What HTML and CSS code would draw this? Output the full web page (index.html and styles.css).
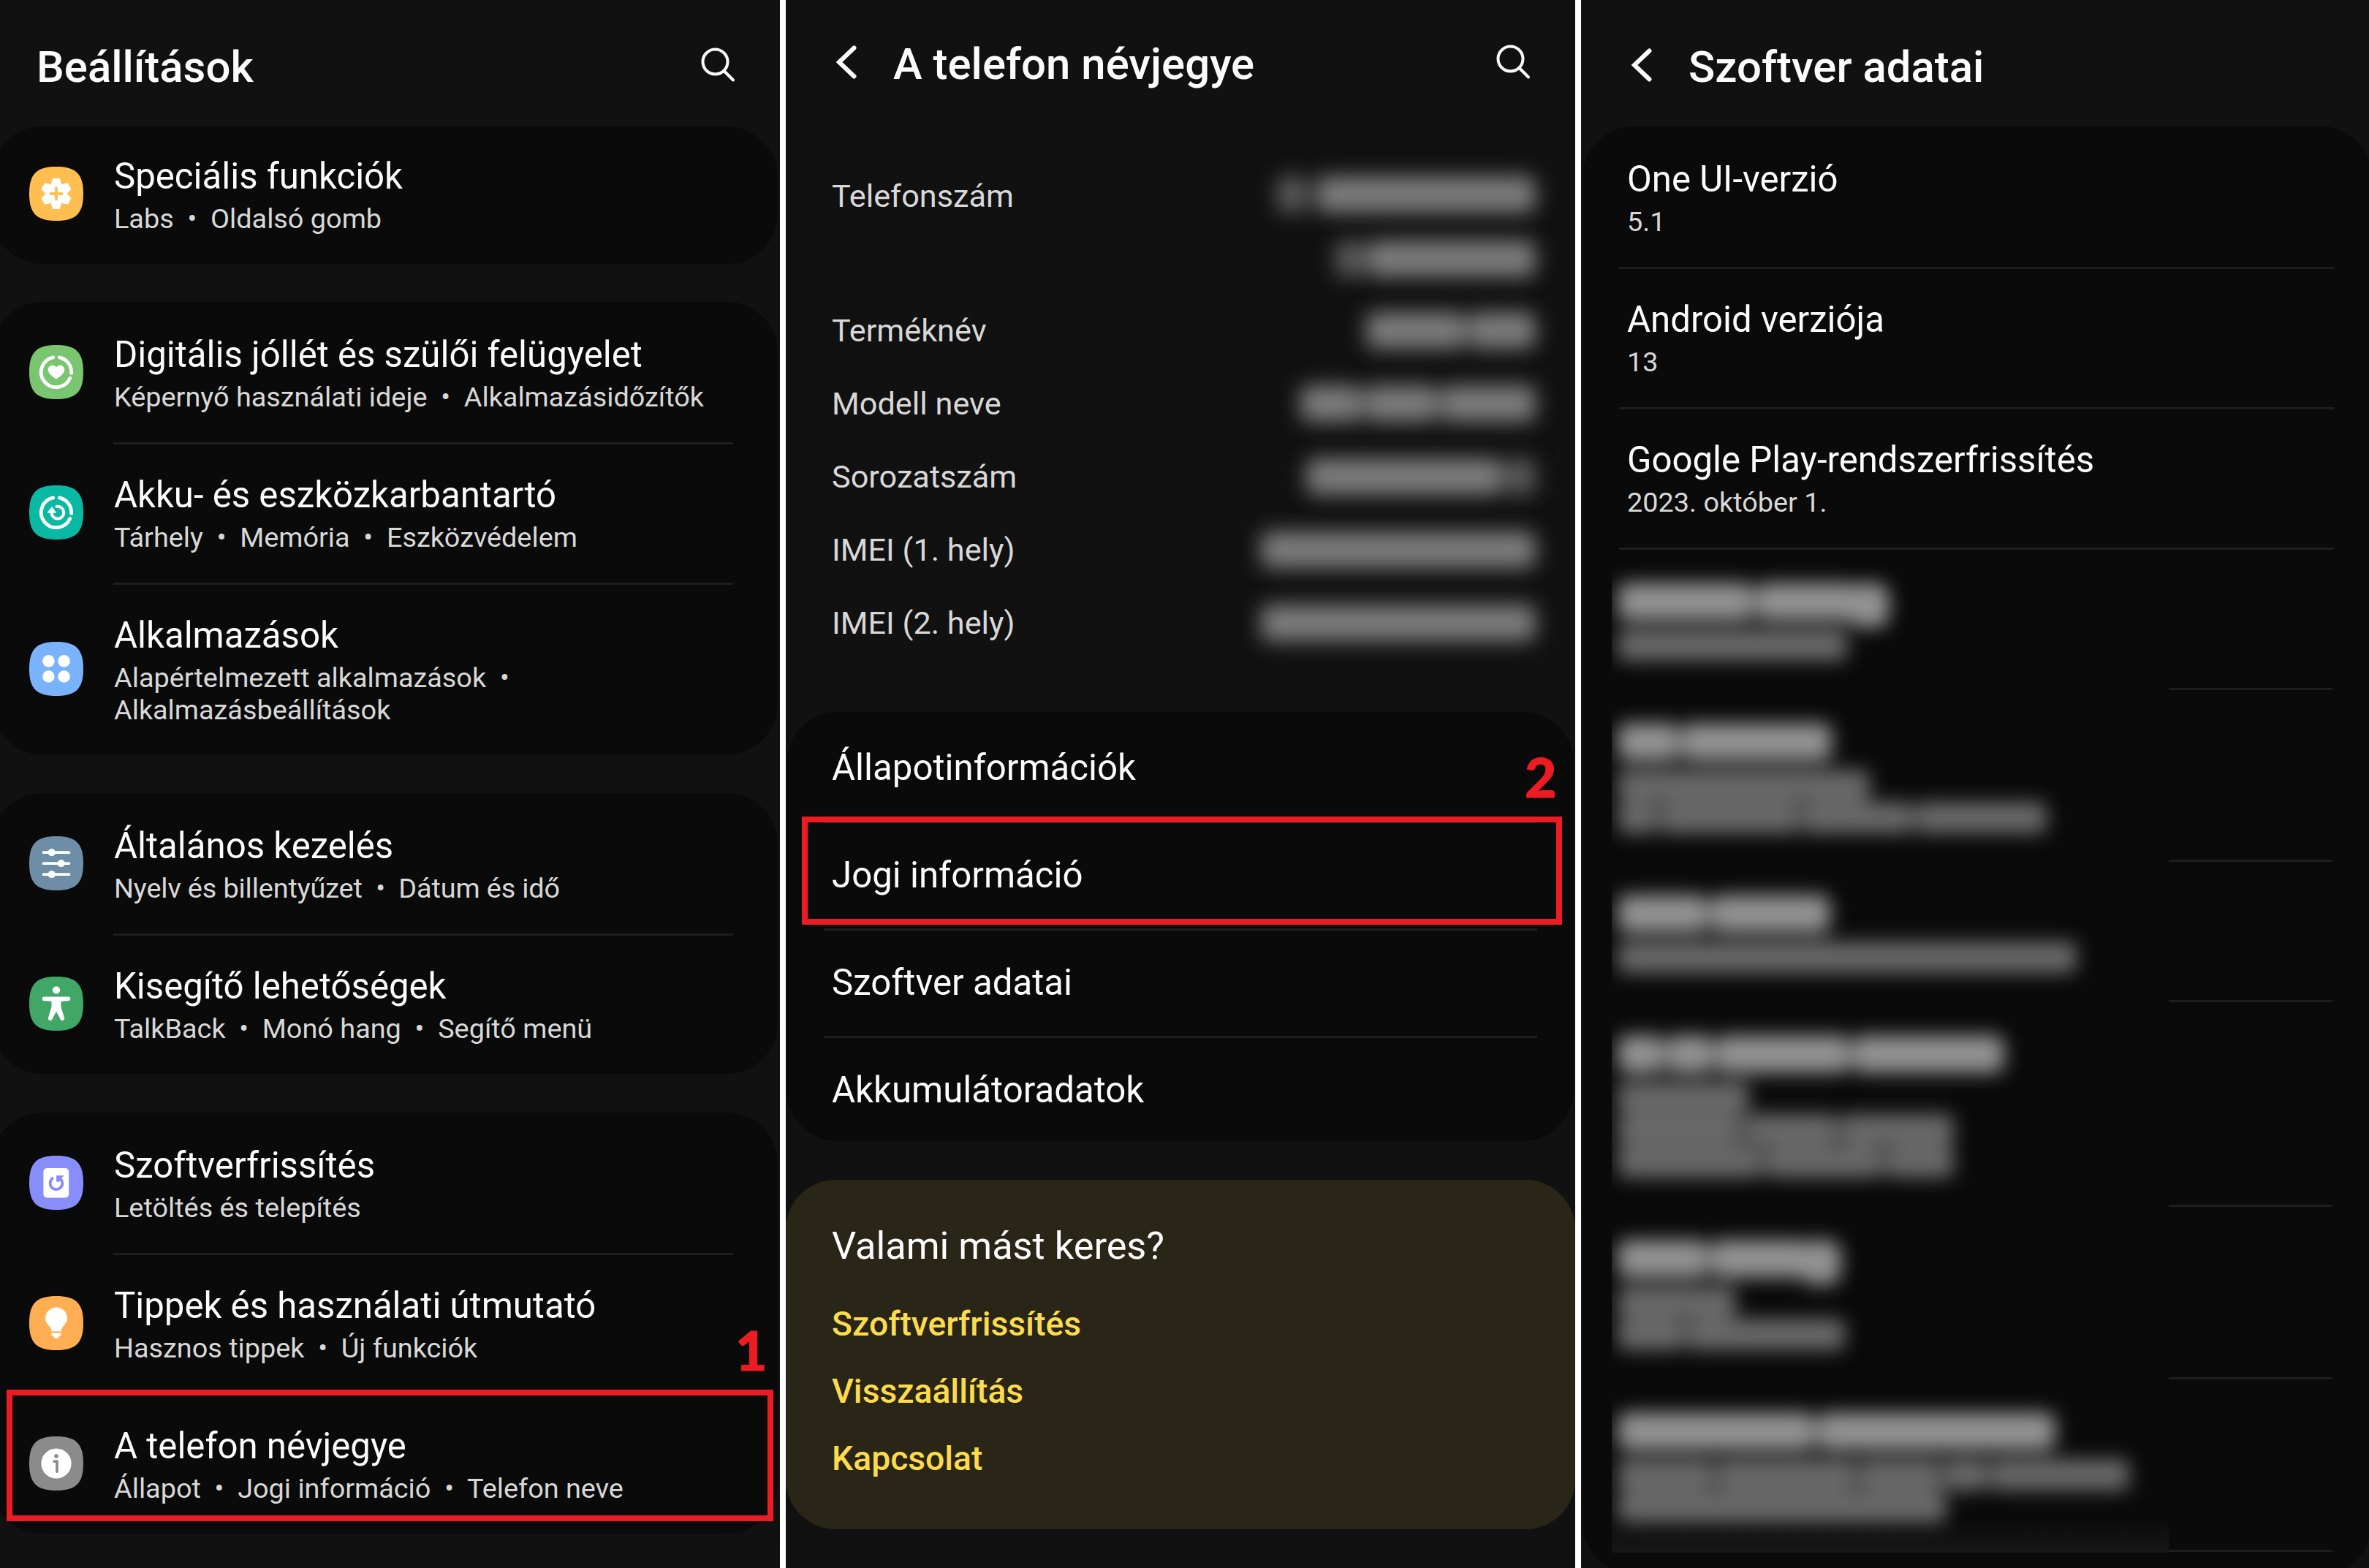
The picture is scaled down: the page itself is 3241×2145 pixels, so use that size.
FILE: index.html
```html
<!DOCTYPE html>
<html lang="hu">
<head>
<meta charset="utf-8">
<title>Beállítások</title>
<link rel="stylesheet" href="styles.css">
</head>
<body>
<main class="screens">

  <section class="screen screen-settings">
    <header class="header">
      <h1 class="heading">Beállítások</h1>
      <svg class="search" viewBox="0 0 50 50"><circle cx="20.5" cy="20.5" r="17"/><path d="M32.5 33L45 45.5"/></svg>
    </header>

    <div class="card card-first">
      <div class="row">
        <svg class="icon" viewBox="0 0 74 74">
          <path fill="#ffbe4f" d="M37 0C64 0 74 10 74 37S64 74 37 74 0 64 0 37 10 0 37 0Z"/>
          <g transform="translate(37 37)" fill="#fff" stroke="#fff" stroke-width="2" stroke-linejoin="round">
            <circle r="13.5"/>
            <path d="M-4-20h8l2 6v28l-2 6h-8l-2-6v-28z"/>
            <path transform="rotate(60)" d="M-4-20h8l2 6v28l-2 6h-8l-2-6v-28z"/>
            <path transform="rotate(120)" d="M-4-20h8l2 6v28l-2 6h-8l-2-6v-28z"/>
          </g>
          <path d="M37 29.5v15M29.5 37h15" stroke="#ffbe4f" stroke-width="3.8" stroke-linecap="round"/>
        </svg>
        <div class="text"><div class="title">Speciális funkciók</div><div class="sub">Labs&nbsp; •&nbsp; Oldalsó gomb</div></div>
      </div>
    </div>

    <div class="card">
      <div class="row">
        <svg class="icon" viewBox="0 0 74 74">
          <path fill="#7ac670" d="M37 0C64 0 74 10 74 37S64 74 37 74 0 64 0 37 10 0 37 0Z"/>
          <path class="ring" d="M32.7 16.9A20.6 20.6 0 1 0 55.7 45.4M41.3 16.9A20.6 20.6 0 0 1 57.6 38.4"/>
          <path fill="#fff" d="M37 46.8C33 43.6 25.8 39.5 25.8 33.6 25.8 27.8 33.5 25.6 37 30.6 40.5 25.6 48.2 27.8 48.2 33.6 48.2 39.5 41 43.6 37 46.8Z"/>
        </svg>
        <div class="text"><div class="title">Digitális jóllét és szülői felügyelet</div><div class="sub">Képernyő használati ideje&nbsp; •&nbsp; Alkalmazásidőzítők</div></div>
      </div>
      <div class="row">
        <svg class="icon" viewBox="0 0 74 74">
          <path fill="#0ab9a3" d="M37 0C64 0 74 10 74 37S64 74 37 74 0 64 0 37 10 0 37 0Z"/>
          <path class="ring" d="M32.7 16.9A20.6 20.6 0 1 0 55.7 45.4M41.3 16.9A20.6 20.6 0 0 1 57.6 38.4"/>
          <path class="ring thin" d="M37.5 29A8.3 8.3 0 1 1 30.6 37.5"/>
          <path fill="#fff" stroke="#fff" stroke-width="1.5" stroke-linejoin="round" d="M31 30.2L36 37H25.5Z"/>
        </svg>
        <div class="text"><div class="title">Akku- és eszközkarbantartó</div><div class="sub">Tárhely&nbsp; •&nbsp; Memória&nbsp; •&nbsp; Eszközvédelem</div></div>
      </div>
      <div class="row row-tall">
        <svg class="icon" viewBox="0 0 74 74">
          <path fill="#79b3fc" d="M37 0C64 0 74 10 74 37S64 74 37 74 0 64 0 37 10 0 37 0Z"/>
          <g fill="#fff"><circle cx="26.4" cy="26.3" r="8.3"/><circle cx="47.6" cy="26.3" r="8.3"/><circle cx="26.4" cy="47.5" r="8.3"/><circle cx="47.6" cy="47.5" r="8.3"/></g>
        </svg>
        <div class="text"><div class="title">Alkalmazások</div><div class="sub">Alapértelmezett alkalmazások&nbsp; •<br>Alkalmazásbeállítások</div></div>
      </div>
    </div>

    <div class="card">
      <div class="row">
        <svg class="icon" viewBox="0 0 74 74">
          <path fill="#6d8ea6" d="M37 0C64 0 74 10 74 37S64 74 37 74 0 64 0 37 10 0 37 0Z"/>
          <path d="M19.5 22.2h35M19.5 37.2h35M19.5 52.2h35" stroke="#fff" stroke-width="3.8" stroke-linecap="round"/>
          <g fill="#fff"><circle cx="30.7" cy="22.2" r="5.1"/><circle cx="43.7" cy="37.2" r="5.1"/><circle cx="30.7" cy="52.2" r="5.1"/></g>
        </svg>
        <div class="text"><div class="title">Általános kezelés</div><div class="sub sub-tight">Nyelv és billentyűzet&nbsp; •&nbsp; Dátum és idő</div></div>
      </div>
      <div class="row row-end">
        <svg class="icon" viewBox="0 0 74 74">
          <path fill="#40a767" d="M37 0C64 0 74 10 74 37S64 74 37 74 0 64 0 37 10 0 37 0Z"/>
          <circle cx="37" cy="18.4" r="5.2" fill="#fff"/>
          <path fill="#fff" stroke="#fff" stroke-width="2" stroke-linejoin="round" d="M19.5 28.6H54.5Q56.3 30.5 54.5 32L42.5 33V41.5L47.3 57.5Q46 60 43.8 58.6L37 45.5 30.2 58.6Q28 60 26.7 57.5L31.5 41.5V33L19.5 32Q17.7 30.5 19.5 28.6Z"/>
        </svg>
        <div class="text"><div class="title">Kisegítő lehetőségek</div><div class="sub">TalkBack&nbsp; •&nbsp; Monó hang&nbsp; •&nbsp; Segítő menü</div></div>
      </div>
    </div>

    <div class="card">
      <div class="row">
        <svg class="icon" viewBox="0 0 74 74">
          <path fill="#888dfc" d="M37 0C64 0 74 10 74 37S64 74 37 74 0 64 0 37 10 0 37 0Z"/>
          <rect x="19.4" y="17" width="34.8" height="40.4" rx="5" fill="#fff"/>
          <path d="M31.8 31A8.4 8.4 0 1 0 43.2 32" fill="none" stroke="#888dfc" stroke-width="3.8" stroke-linecap="round"/>
          <path d="M37.8 27.6H46.4L41.2 32.6V35H37.8Z" fill="#888dfc" stroke="#888dfc" stroke-width="1.4" stroke-linejoin="round"/>
        </svg>
        <div class="text"><div class="title">Szoftverfrissítés</div><div class="sub">Letöltés és telepítés</div></div>
      </div>
      <div class="row">
        <svg class="icon" viewBox="0 0 74 74">
          <path fill="#ffaf52" d="M37 0C64 0 74 10 74 37S64 74 37 74 0 64 0 37 10 0 37 0Z"/>
          <path fill="#fff" d="M37 15.6A15 15 0 0 1 52 30.6C52 39 43.6 41 43.6 48.2H30.4C30.4 41 22 39 22 30.6A15 15 0 0 1 37 15.6ZM30.4 50.6H43.6V53.4Q41 54 40 57Q37 59.6 34 57Q33 54 30.4 53.4Z"/>
        </svg>
        <div class="text"><div class="title">Tippek és használati útmutató</div><div class="sub">Hasznos tippek&nbsp; •&nbsp; Új funkciók</div></div>
      </div>
      <div class="row">
        <svg class="icon" viewBox="0 0 74 74">
          <path fill="#8b8b8b" d="M37 0C64 0 74 10 74 37S64 74 37 74 0 64 0 37 10 0 37 0Z"/>
          <circle cx="37" cy="37" r="20.6" fill="#fff"/>
          <circle cx="37" cy="27" r="2.8" fill="#8b8b8b"/>
          <path d="M34.2 34.2H38V48" fill="none" stroke="#8b8b8b" stroke-width="3.8" stroke-linecap="round" stroke-linejoin="round"/>
        </svg>
        <div class="text"><div class="title">A telefon névjegye</div><div class="sub">Állapot&nbsp; •&nbsp; Jogi információ&nbsp; •&nbsp; Telefon neve</div></div>
      </div>
    </div>
    <div class="marker marker-one"><span class="step">1</span></div>
  </section>

  <section class="screen screen-about">
    <header class="header">
      <svg class="back" viewBox="0 0 30 46"><path d="M25.5 3.5L5 23 25.5 42.5"/></svg>
      <h1 class="heading">A telefon névjegye</h1>
      <svg class="search" viewBox="0 0 50 50"><circle cx="20.5" cy="20.5" r="17"/><path d="M32.5 33L45 45.5"/></svg>
    </header>

    <dl class="facts">
      <div class="fact fact-double"><dt>Telefonszám</dt>
        <dd><div class="hidden-line"><i class="dim" style="width:42px"></i><i class="spaced" style="width:300px"></i></div><div class="hidden-line"><i class="dim" style="width:40px"></i><i style="width:230px"></i></div></dd></div>
      <div class="fact"><dt>Terméknév</dt><dd><div class="hidden-line"><i style="width:136px"></i><i style="width:92px"></i></div></dd></div>
      <div class="fact"><dt>Modell neve</dt><dd><div class="hidden-line"><i style="width:84px"></i><i style="width:100px"></i><i style="width:130px"></i></div></dd></div>
      <div class="fact"><dt>Sorozatszám</dt><dd><div class="hidden-line"><i style="width:268px"></i><i class="dim" style="width:42px"></i></div></dd></div>
      <div class="fact"><dt>IMEI (1. hely)</dt><dd><div class="hidden-line"><i style="width:376px"></i></div></dd></div>
      <div class="fact"><dt>IMEI (2. hely)</dt><dd><div class="hidden-line"><i style="width:376px"></i></div></dd></div>
    </dl>

    <nav class="card links-card">
      <a class="link-row">Állapotinformációk</a>
      <a class="link-row">Jogi információ</a>
      <a class="link-row">Szoftver adatai</a>
      <a class="link-row">Akkumulátoradatok</a>
    </nav>

    <aside class="suggest">
      <h2 class="suggest-title">Valami mást keres?</h2>
      <a class="suggest-link">Szoftverfrissítés</a>
      <a class="suggest-link">Visszaállítás</a>
      <a class="suggest-link">Kapcsolat</a>
    </aside>
    <div class="marker marker-two"><span class="step">2</span></div>
  </section>

  <section class="screen screen-software">
    <header class="header">
      <svg class="back" viewBox="0 0 30 46"><path d="M25.5 3.5L5 23 25.5 42.5"/></svg>
      <h1 class="heading">Szoftver adatai</h1>
    </header>
    <div class="card card-software">
      <div class="entry entry-first"><div class="title">One UI-verzió</div><div class="sub">5.1</div></div>
      <div class="entry"><div class="title">Android verziója</div><div class="sub">13</div></div>
      <div class="entry"><div class="title">Google Play-rendszerfrissítés</div><div class="sub">2023. október 1.</div></div>
      <div class="veiled">
        <div class="veil">
          <div class="group" style="height:192px"><div class="bar strong"><i style="width:186px"></i><i style="width:138px"></i><i class="deep" style="width:56px"></i></div><div class="bar"><i style="width:314px"></i></div></div>
          <div class="group" style="height:235px"><div class="bar strong"><i style="width:84px"></i><i style="width:206px"></i></div><div class="bar"><i style="width:345px"></i></div><div class="bar"><i style="width:54px"></i><i style="width:192px"></i><i style="width:152px"></i><i style="width:180px"></i></div></div>
          <div class="group" style="height:192px"><div class="bar strong"><i style="width:124px"></i><i style="width:164px"></i></div><div class="bar"><i style="width:628px"></i></div></div>
          <div class="group" style="height:280px"><div class="bar strong"><i style="width:64px"></i><i style="width:64px"></i><i style="width:184px"></i><i style="width:208px"></i></div><div class="bar"><i style="width:180px"></i></div><div class="bar"><i style="width:170px"></i><i style="width:128px"></i><i style="width:156px"></i></div><div class="bar"><i style="width:198px"></i><i style="width:162px"></i><i style="width:94px"></i></div></div>
          <div class="group" style="height:236px"><div class="bar strong"><i style="width:124px"></i><i style="width:134px"></i><i class="deep" style="width:56px"></i></div><div class="bar"><i style="width:162px"></i></div><div class="bar"><i style="width:92px"></i><i style="width:216px"></i></div></div>
          <div class="group" style="height:237px"><div class="bar strong"><i style="width:270px"></i><i style="width:326px"></i></div><div class="bar"><i style="width:132px"></i><i style="width:192px"></i><i style="width:112px"></i><i style="width:62px"></i><i style="width:190px"></i></div><div class="bar"><i style="width:450px"></i></div></div>
        </div>
        <div class="rules">
          <div class="rule" style="height:192px"></div>
          <div class="rule" style="height:235px"></div>
          <div class="rule" style="height:192px"></div>
          <div class="rule" style="height:280px"></div>
          <div class="rule" style="height:236px"></div>
          <div class="rule" style="height:236px"></div>
        </div>
      </div>
    </div>
  </section>

</main>
</body>
</html>
```
FILE: styles.css
```css
* { box-sizing: border-box; }

body {
  margin: 0;
  background: #fff;
  color: #fcfcfc;
  font-family: Roboto, sans-serif;
  overflow: hidden;
}

h1, h2, dl, dd { margin: 0; font-weight: 400; }

.screens {
  display: grid;
  grid-template-columns: 1067px 1080px 1078px;
  column-gap: 8px;
  width: 3241px;
  height: 2145px;
}

.screen {
  position: relative;
  height: 2145px;
  overflow: hidden;
  background: #111;
}

/* Header */
.header {
  display: flex;
  align-items: center;
  height: 173px;
  padding: 11px 59px 0 50px;
}
.heading {
  flex: 1;
  font-size: 59.9px;
  line-height: 70px;
  font-weight: 500;
}
.search {
  width: 50px;
  height: 50px;
  margin-bottom: 7px;
  fill: none;
  stroke: #fcfcfc;
  stroke-width: 4;
  stroke-linecap: round;
}
.back {
  width: 30px;
  height: 46px;
  margin: 0 49px 6px 0;
  fill: none;
  stroke: #fcfcfc;
  stroke-width: 6;
  stroke-linecap: round;
}
.screen-about .header { padding: 3px 59px 0 68px; }
.screen-software .header { padding: 11px 60px 0 68px; }

/* Cards and rows */
.card {
  border-radius: 70px;
  background: #0a0a0a;
}
.screen-settings .card {
  width: 1076px;
  margin: 0 0 53px -12px;
}
.screen-settings .card-first {
  padding-bottom: 4px;
  margin-bottom: 52px;
}
.row {
  display: flex;
  align-items: center;
  height: 192px;
  padding: 0 61px 0 52px;
}
.card-first .row { height: 184px; }
.row-tall { height: 235px; }
.icon {
  flex: none;
  width: 74px;
  height: 74px;
  margin-right: 41px;
}
.ring {
  fill: none;
  stroke: #fff;
  stroke-width: 4.8;
  stroke-linecap: round;
}
.ring.thin { stroke-width: 4; }
.text {
  flex: 1;
  align-self: stretch;
  display: flex;
  flex-direction: column;
  justify-content: center;
  padding: 5px 0 0 1px;
}
.row + .row .text {
  padding-top: 2px;
  border-top: 3px solid #1e1e1e;
}
.title {
  font-size: 49.15px;
  line-height: 57px;
  white-space: nowrap;
}
.sub {
  margin-top: 8.5px;
  color: #d8d8d8;
  font-size: 37.85px;
  line-height: 43.6px;
  white-space: nowrap;
}
.sub-tight { letter-spacing: -0.13px; }

/* About screen */
.facts { padding: 45px 54px 0 63px; }
.fact {
  display: flex;
  justify-content: space-between;
  align-items: center;
  height: 100px;
  color: #d8d8d8;
  font-size: 43.25px;
  line-height: 52px;
}
.fact dt { padding-top: 2px; }
.fact-double {
  align-items: flex-start;
  height: 184px;
  padding-top: 23px;
}
.hidden-line {
  display: flex;
  gap: 4px;
  filter: blur(14px);
}
.hidden-line i {
  height: 50px;
  border-radius: 12px;
  background: #7c7c7c;
}
.hidden-line .dim { background: #5a5a5a; }
.hidden-line .spaced { margin-left: 8px; }
.hidden-line + .hidden-line { margin-top: 38px; }
.fact-double .hidden-line { justify-content: flex-end; }

.links-card {
  width: 1077px;
  margin: 72px 0 53px 1px;
  padding-top: 2px;
}
.link-row {
  display: flex;
  align-items: center;
  height: 147px;
  margin: 0 50px 0 51px;
  padding: 0 11px;
  font-size: 49.2px;
}
.link-row + .link-row {
  padding-bottom: 3px;
  border-top: 3px solid #1e1e1e;
}
.link-row:last-child { height: 144px; padding-bottom: 0; }

.suggest {
  display: flex;
  flex-direction: column;
  height: 478px;
  padding: 59px 63px 0;
  border-radius: 68px;
  background: #292517;
}
.suggest-title {
  margin-bottom: 30px;
  font-size: 52.3px;
  line-height: 62px;
}
.suggest-link {
  color: #fcdc4c;
  font-size: 46.25px;
  line-height: 92px;
  font-weight: 500;
}

/* Software screen */
.card-software {
  width: 1080px;
  height: 1980px;
  margin-left: 2px;
}
.entry {
  display: flex;
  flex-direction: column;
  justify-content: center;
  height: 192px;
  margin: 0 52px 0 50px;
  padding: 2px 0 0 11px;
  border-bottom: 3px solid #1e1e1e;
}
.entry-first { height: 195px; padding-top: 5px; }
.veiled { display: flex; }
.veil {
  width: 762px;
  height: 1372px;
  margin: 0 0 0 40px;
  padding-left: 8px;
  overflow: hidden;
  background: linear-gradient(#0a0a0a 0, #0a0a0a 1325px, #161616 1368px);
}
.group {
  padding-top: 45px;
  filter: blur(13px);
}
.bar {
  display: flex;
  gap: 3px;
  margin-top: 1px;
}
.bar i {
  height: 43px;
  border-radius: 10px;
  background: #696969;
}
.bar.strong { height: 52px; margin: 0 0 12px; }
.bar.strong i {
  height: 52px;
  border-radius: 14px;
  background: #929292;
}
.bar.strong .deep { height: 62px; margin-left: -14px; border-radius: 20px; }
.rules { width: 224px; }
.rule { border-bottom: 3px solid #1e1e1e; }

/* Numbered step markers */
.marker {
  position: absolute;
  border: 8px solid #ed1c24;
}
.marker-one { left: 9px; top: 1901px; width: 1049px; height: 180px; }
.marker-two { left: 22px; top: 1117px; width: 1040px; height: 148px; }
.step {
  position: absolute;
  color: #ed1c24;
  font: 900 75px/76px Lato, sans-serif;
  -webkit-text-stroke: 1px #ed1c24;
}
.marker-one .step { left: 989px; top: -101px; }
.marker-two .step { left: 981px; top: -101px; }
```
